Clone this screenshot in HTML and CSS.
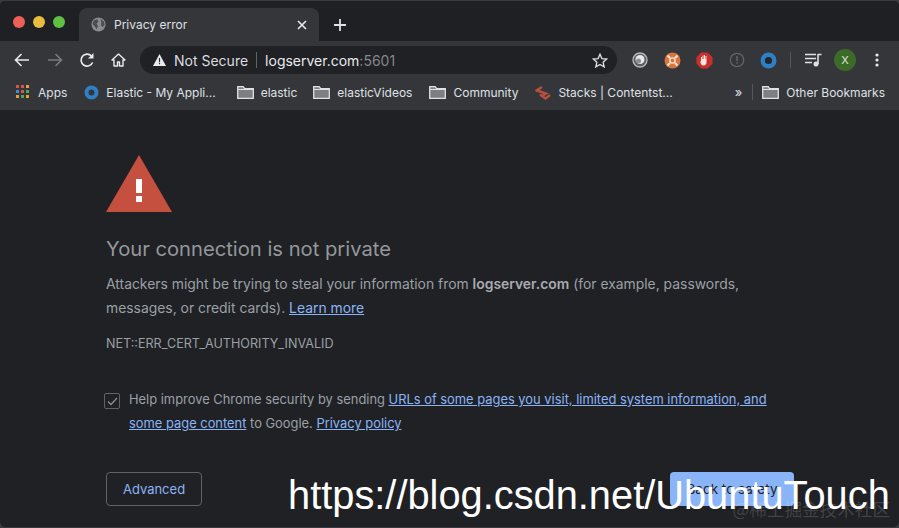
FILE: index.html
```html
<!DOCTYPE html>
<html lang="en">
<head>
  <meta charset="UTF-8" />
  <title>Privacy error</title>
  <link rel="stylesheet" href="styles.css">
</head>
<body>
  <div class="window">

    <div class="tabstrip">
      <div class="lights">
        <span class="light red"></span>
        <span class="light yellow"></span>
        <span class="light green"></span>
      </div>
      <div class="tab">
        <svg class="tab-globe" width="15" height="15" viewBox="0 0 16 16"><circle cx="8" cy="8" r="7.5" fill="#8a8c8f"/><path d="M3 3.500 7 2.500 8 5 6 7 7.500 9.500 6 13 4 10 1.500 7.500ZM10 2 13.500 4.500 14.500 8 12.500 11 10.500 8.500 11 5.500Z" fill="#4c4e52"/></svg>
        <span class="tab-title">Privacy error</span>
        <svg class="tab-close" width="10" height="10" viewBox="0 0 10 10"><path d="M1 1 9 9M9 1 1 9" stroke="#e8eaed" stroke-width="1.6"/></svg>
      </div>
      <svg class="new-tab" width="14" height="14" viewBox="0 0 14 14"><path d="M7 1V13M1 7H13" stroke="#dfe1e5" stroke-width="1.8"/></svg>
    </div>

    <div class="toolbar">
      <svg class="nav-icon nav-back" width="16" height="14" viewBox="0 0 16 14"><path d="M15 7H2M7.500 1 1.500 7l6 6" fill="none" stroke="#e8eaed" stroke-width="1.6"/></svg>
      <svg class="nav-icon" width="16" height="14" viewBox="0 0 16 14"><path d="M1 7H14M8.500 1l6 6-6 6" fill="none" stroke="#777a7e" stroke-width="1.6"/></svg>
      <svg class="nav-icon" width="16" height="16" viewBox="0 0 16 16"><path d="M13.600 10.500A6 6 0 1 1 12.500 4" fill="none" stroke="#e8eaed" stroke-width="1.7"/><path d="M14.500 1v5.500H9z" fill="#e8eaed"/></svg>
      <svg class="nav-icon" width="15" height="14" viewBox="0 0 15 14"><path d="M7.500 1 1 7h2v6h3.500V9h2v4H12V7h2z" fill="none" stroke="#e8eaed" stroke-width="1.4" stroke-linejoin="round"/></svg>

      <div class="omnibox">
        <svg class="warn" width="13" height="12" viewBox="0 0 13 12"><path d="M6.500 0 13 12H0z" fill="#e8eaed"/><path d="M5.900 4h1.200v4.200H5.900zM5.900 9h1.200v1.200H5.900z" fill="#292b2e"/></svg>
        <span class="not-secure">Not Secure</span>
        <span class="omni-sep"></span>
        <span class="url">logserver.com<span class="port">:5601</span></span>
        <svg class="star" width="16" height="15" viewBox="0 0 16 15"><path d="M8 1.200 9.900 5.600l4.800.4-3.600 3.200 1.100 4.700L8 11.400 3.800 13.900l1.100-4.700L1.300 6l4.800-.4z" fill="none" stroke="#dfe1e5" stroke-width="1.3"/></svg>
      </div>

      <div class="extensions">
        <svg class="ext" width="16" height="16" viewBox="0 0 16 16"><circle cx="8" cy="8" r="7" fill="#5c5e62" stroke="#b4b6b9" stroke-width="1.4"/><circle cx="8" cy="7.500" r="4.500" fill="#e8e8e8"/><circle cx="6.500" cy="9" r="2.500" fill="#8d8f92"/></svg>
        <svg class="ext" width="17" height="17" viewBox="0 0 17 17"><circle cx="8.500" cy="8.500" r="8" fill="#d9743a"/><circle cx="8.500" cy="8.500" r="2.600" fill="none" stroke="#f5e3d6" stroke-width="1.400"/><path d="M3.500 3.500 6 6M13.500 3.500 11 6M3.500 13.500 6 11M13.500 13.500 11 11" stroke="#f5e3d6" stroke-width="2.200"/></svg>
        <svg class="ext" width="17" height="17" viewBox="0 0 17 17"><path d="M5.200.5h6.600l4.700 4.700v6.600l-4.700 4.700H5.200L.5 11.800V5.200z" fill="#c9302a"/><path d="M5 8V5h1v2h.5V3.500h1V7h.5V3h1v4h.5V4h1v6c0 2-1 3.500-3 3.500S5.500 12.500 4 9.500l1 0z" fill="#f3e6e4"/></svg>
        <svg class="ext" width="16" height="16" viewBox="0 0 16 16"><circle cx="8" cy="8" r="6.700" fill="none" stroke="#606266" stroke-width="1.300"/><path d="M7.200 4h1.600v5H7.200zM7.200 10.200h1.600v1.600H7.200z" fill="#606266"/></svg>
        <svg class="ext" width="17" height="17" viewBox="0 0 17 17"><circle cx="8.500" cy="8.500" r="5.800" fill="#23272b" stroke="#2f7fc4" stroke-width="4.400"/></svg>
      </div>
      <span class="tool-sep"></span>
      <svg class="media" width="17" height="14" viewBox="0 0 17 14"><path d="M0 1.500H11M0 5.500H11M0 9.500H7" stroke="#dfe1e5" stroke-width="1.600"/><path d="M13 1.500H16.500M13 1V11" stroke="#dfe1e5" stroke-width="1.600" fill="none"/><circle cx="11" cy="11" r="2.500" fill="#dfe1e5"/></svg>
      <span class="avatar">X</span>
      <svg class="menu-dots" width="4" height="14" viewBox="0 0 4 14"><circle cx="2" cy="2" r="1.600" fill="#e8eaed"/><circle cx="2" cy="7" r="1.600" fill="#e8eaed"/><circle cx="2" cy="12" r="1.600" fill="#e8eaed"/></svg>
    </div>

    <div class="bookmarks">
      <svg class="bm-apps" width="13" height="14" viewBox="0 0 13 14">
        <rect x="0" y="0" width="3" height="3" fill="#d9534a"/><rect x="5" y="0" width="3" height="3" fill="#d9534a"/><rect x="10" y="0" width="3" height="3" fill="#e0a33c"/>
        <rect x="0" y="5" width="3" height="3" fill="#3f8fd0"/><rect x="5" y="5" width="3" height="3" fill="#d9534a"/><rect x="10" y="5" width="3" height="3" fill="#4fa85a"/>
        <rect x="0" y="10" width="3" height="3" fill="#e0a33c"/><rect x="5" y="10" width="3" height="3" fill="#4fa85a"/><rect x="10" y="10" width="3" height="3" fill="#e0a33c"/>
      </svg>
      <span class="bm bm-first">Apps</span>
      <svg class="bm-icon bm-elastic" width="15" height="15" viewBox="0 0 15 15"><circle cx="7.500" cy="7.500" r="5" fill="none" stroke="#2f7fc4" stroke-width="4"/></svg>
      <span class="bm bm-a">Elastic - My Appli...</span>
      <svg class="bm-icon folder" viewBox="0 0 17 13"><use href="#folder"/></svg>
      <span class="bm bm-b">elastic</span>
      <svg class="bm-icon folder" viewBox="0 0 17 13"><use href="#folder"/></svg>
      <span class="bm bm-c">elasticVideos</span>
      <svg class="bm-icon folder" viewBox="0 0 17 13"><use href="#folder"/></svg>
      <span class="bm bm-d">Community</span>
      <svg class="bm-icon bm-stacks" width="17" height="15" viewBox="0 0 17 15"><path d="M1.500 6 8 2M3 5.500 12 8.500 7 11.500M6 9.500 11.500 13.500 16 10" fill="none" stroke="#b4503f" stroke-width="2.400"/></svg>
      <span class="bm bm-e">Stacks | Contentst...</span>
      <span class="chevrons">»</span>
      <span class="bm-sep"></span>
      <svg class="bm-icon folder" viewBox="0 0 17 13"><use href="#folder"/></svg>
      <span class="bm">Other Bookmarks</span>
    </div>

    <div class="page">
      <svg class="big-warn" width="66" height="57" viewBox="0 0 66 57">
        <path d="M33 0 66 57H0z" fill="#c5503f"/>
        <path d="M30 24h6v14h-6zM30 41h6v6h-6z" fill="#fff"/>
      </svg>
      <h1>Your connection is not private</h1>
      <p class="desc">Attackers might be trying to steal your information from <strong>logserver.com</strong> (for example, passwords, messages, or credit cards). <a href="#">Learn more</a></p>
      <p class="code">NET::ERR_CERT_AUTHORITY_INVALID</p>
      <div class="optin">
        <span class="check"><svg width="11" height="9" viewBox="0 0 11 9"><path d="M1 4.500 4 7.500 10 1" fill="none" stroke="#8a8e93" stroke-width="1.300"/></svg></span>
        <p>Help improve Chrome security by sending <a href="#">URLs of some pages you visit, limited system information, and some page content</a> to Google. <a href="#">Privacy policy</a></p>
      </div>
      <div class="actions">
        <button class="btn-adv">Advanced</button>
        <button class="btn-back">Back to safety</button>
      </div>
    </div>

    <div class="wm-url">https://blog.csdn.net/UbuntuTouch</div>
    <div class="wm-cn">@稀土掘金技术社区</div>
  </div>

  <svg class="defs" width="0" height="0">
    <symbol id="folder" viewBox="0 0 17 13">
      <path d="M.7 12.300V.7h5.500l1.500 2h8.600v9.600z" fill="#7d7f82" stroke="#dfe1e5" stroke-width="1.300"/>
      <path d="M1 3.500H16" stroke="#dfe1e5" stroke-width="1"/>
    </symbol>
  </svg>
</body>
</html>
```

FILE: styles.css
```css
:root {
  --frame: #202124;
  --bar: #35363a;
  --text: #e8eaed;
  --muted: #9aa0a6;
  --link: #8ab4f8;
}

html, body {
  margin: 0;
  height: 100%;
  background: #3a3b3e;
  overflow: hidden;
}

body {
  font-family: "Inter", "Liberation Sans", sans-serif;
}

.window {
  position: relative;
  height: 526px;
  margin-top: 1px;
  display: flex;
  flex-direction: column;
  overflow: hidden;
  border-radius: 5px 5px 6px 6px;
  background: var(--frame);
}

.tabstrip {
  height: 40px;
  flex: none;
  display: flex;
  align-items: flex-end;
  background: #1f2023;
}

.lights {
  display: flex;
  gap: 8px;
  padding: 0 0 13px 13px;
  width: 65px;
}

.light {
  width: 12px;
  height: 12px;
  border-radius: 50%;
}

.red { background: #ee5f57; }
.yellow { background: #e9bd3e; }
.green { background: #5fc043; }

.tab {
  width: 240px;
  height: 33px;
  margin-left: 1px;
  display: flex;
  align-items: center;
  padding: 0 12px;
  box-sizing: border-box;
  background: var(--bar);
  border-radius: 8px 8px 0 0;
}

.tab-globe { flex: none; margin-right: 8px; }

.tab-title {
  flex: 1;
  font-size: 12px;
  color: #dfe1e5;
}

.new-tab {
  align-self: center;
  margin: 8px 0 0 14px;
}

.toolbar {
  height: 38px;
  flex: none;
  display: flex;
  align-items: center;
  padding-left: 14px;
  background: var(--bar);
}

.nav-icon { flex: none; margin-right: 16px; }
.nav-back { margin-right: 17px; }

.omnibox {
  width: 477px;
  height: 28px;
  flex: none;
  display: flex;
  align-items: center;
  margin-left: -2px;
  padding: 0 9px 0 13px;
  box-sizing: border-box;
  background: #202124;
  border-radius: 14px;
  font-size: 14px;
  color: #e8eaed;
}

.warn { margin-right: 8px; }
.not-secure { color: #dadce0; }

.omni-sep {
  width: 1px;
  height: 16px;
  margin: 0 8px;
  background: #5f6368;
}

.url { flex: 1; }
.port { color: #84878b; }

.extensions {
  display: flex;
  align-items: center;
  gap: 15.5px;
  margin-left: 15px;
}

.tool-sep {
  width: 1px;
  height: 16px;
  margin: 0 14px 0 13px;
  background: #55575b;
}

.media { flex: none; }

.avatar {
  width: 22px;
  height: 22px;
  margin-left: 12px;
  display: flex;
  align-items: center;
  justify-content: center;
  border-radius: 50%;
  background: #3c6b27;
  color: #dfe8d8;
  font-size: 11px;
}

.menu-dots { margin-left: 19px; }

.bookmarks {
  height: 31px;
  flex: none;
  display: flex;
  align-items: center;
  padding: 0 14px 5px 16px;
  background: var(--bar);
  font-size: 12px;
  color: #dfe1e5;
  white-space: nowrap;
  box-sizing: border-box;
}

.bm-apps { flex: none; margin-right: 9px; }
.bm-icon { flex: none; margin-right: 7px; }
.folder { width: 17px; height: 13px; }
.bm-first { margin-right: 17px; }
.bm-a { margin-right: 21px; }
.bm-b { margin-right: 16px; }
.bm-c { margin-right: 17px; }
.bm-d { margin-right: 16px; }
.bm-e { margin-right: auto; }

.chevrons { font-size: 13px; }

.bm-sep {
  width: 1px;
  height: 16px;
  margin: 0 9px 0 10px;
  background: #55575b;
}

.page {
  flex: 1;
  padding: 45px 0 0 106px;
  background: #202124;
  color: var(--muted);
  font-size: 13.9px;
}

.big-warn { display: block; }

h1 {
  margin: 23px 0 0;
  font-size: 20.2px;
  font-weight: 400;
  line-height: 28px;
  color: #94979c;
}

.desc {
  width: 660px;
  margin: 9px 0 0;
  line-height: 24px;
}

.desc strong { font-weight: 600; color: #a8acb1; }

a { color: var(--link); }

.code {
  margin: 15px 0 0;
  font-size: 12.6px;
  line-height: 18px;
}

.optin {
  display: flex;
  margin: 35px 0 0 -2px;
}

.check {
  width: 14px;
  height: 14px;
  flex: none;
  display: flex;
  align-items: center;
  justify-content: center;
  margin: 5px 9px 0 0;
  border: 1px solid #5f6368;
  border-radius: 2px;
}

.optin p {
  width: 650px;
  margin: 0;
  font-size: 12.9px;
  line-height: 24px;
}

.actions {
  width: 688px;
  margin-top: 36px;
  display: flex;
  justify-content: space-between;
}

.actions button {
  height: 34px;
  font-family: inherit;
  font-size: 13px;
  border-radius: 4px;
}

.btn-adv {
  width: 96px;
  background: transparent;
  border: 1px solid #5f6368;
  color: var(--link);
}

.actions .btn-back {
  width: 124px;
  background: var(--link);
  border: none;
  color: #202124;
  font-size: 13.5px;
}

.wm-url {
  position: absolute;
  left: 288px;
  top: 470px;
  font-family: "Liberation Sans", sans-serif;
  font-size: 39.8px;
  line-height: 48px;
  color: #fff;
  white-space: nowrap;
}

.wm-cn {
  position: absolute;
  right: 9px;
  top: 495px;
  font-family: "Noto Sans CJK SC", sans-serif;
  font-size: 17.6px;
  color: rgba(255, 255, 255, 0.16);
  white-space: nowrap;
}

.defs { position: absolute; }
```
